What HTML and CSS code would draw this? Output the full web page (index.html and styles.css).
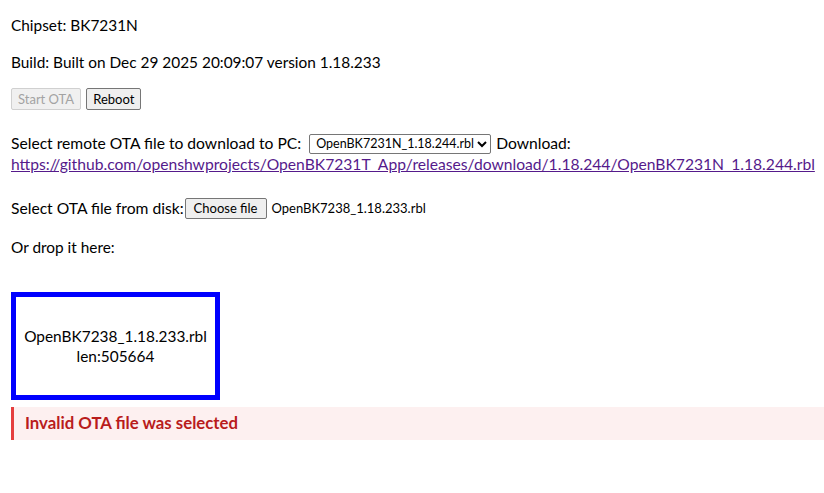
FILE: index.html
```html
<!DOCTYPE html>
<html lang="en">
<head>
<meta charset="utf-8">
<title>OTA</title>
<link rel="stylesheet" href="styles.css">
</head>
<body>
<div class="page">
  <div class="line l-chip">Chipset: BK7231N</div>
  <div class="line l-build">Build: Built on Dec 29 2025 20:09:07 version 1.18.233</div>
  <div class="buttons">
    <button class="btn" disabled>Start OTA</button>
    <button class="btn">Reboot</button>
  </div>
  <div class="remote">
    <div class="line wide">Select remote OTA file to download to PC:
      <select class="sel"><option>OpenBK7231N_1.18.244.rbl</option></select>
      Download:</div>
    <div class="line wide"><a class="link" href="#">https://github.com/openshwprojects/OpenBK7231T_App/releases/download/1.18.244/OpenBK7231N_1.18.244.rbl</a></div>
  </div>
  <div class="line disk wide">Select OTA file from disk:<span class="btn file-btn">Choose file</span><span class="file-name">OpenBK7238_1.18.233.rbl</span></div>
  <div class="line drop-label">Or drop it here:</div>
  <div class="dropzone">
    <div>OpenBK7238_1.18.233.rbl</div>
    <div>len:505664</div>
  </div>
  <div class="error">Invalid OTA file was selected</div>
</div>
</body>
</html>
```

FILE: styles.css
```css
html, body {
  margin: 0;
  padding: 0;
  background: #fff;
}
.page {
  padding: 15px 11px 40px;
  font-family: "Lato", "Open Sans", sans-serif;
  font-size: 15.4px;
  line-height: 20px;
  color: #000;
}
.line {
  line-height: 20px;
  white-space: nowrap;
}
.wide { font-size: 15.65px; }
.l-chip { margin-bottom: 17px; }
.l-build { margin-bottom: 16px; }
.buttons {
  display: flex;
  gap: 5px;
  height: 22px;
  margin-bottom: 23px;
}
.btn {
  font-family: inherit;
  font-size: 13px;
  line-height: 16px;
  padding: 2px 6px;
  background: #efefef;
  border: 1px solid #767676;
  border-radius: 2px;
  color: #000;
  box-sizing: border-box;
  height: 22px;
}
.btn:disabled {
  color: #a3a3a3;
  border-color: #d0d0d0;
  background: #f0f0f0;
}
.remote { margin-bottom: 24px; }
.sel {
  font-family: inherit;
  font-size: 12.5px;
  height: 20px;
  border: 1px solid #767676;
  border-radius: 2px;
  background: #fff;
  color: #000;
  vertical-align: 1px;
  padding: 0 0 0 2px;
  margin: 0 1px 0 4px;
}
.link {
  color: #551a8b;
  text-decoration: underline;
}
.disk {
  display: flex;
  align-items: center;
  margin-bottom: 18px;
}
.file-btn {
  display: inline-flex;
  align-items: center;
  margin-left: 1px;
  height: 21px;
  padding: 0 8px;
}
.file-name {
  font-size: 13px;
  margin-left: 5px;
}
.drop-label { margin-bottom: 35px; }
.dropzone {
  width: 199px;
  height: 98px;
  border: 5px solid #0000ff;
  display: flex;
  flex-direction: column;
  align-items: center;
  justify-content: center;
  text-align: center;
  margin-bottom: 7px;
}
.error {
  width: 100%;
  height: 33px;
  box-sizing: content-box;
  background: #fdf0f0;
  border-left: 3px solid #e53e3e;
  padding: 0 0 0 11px;
  color: #b91c1c;
  font-weight: bold;
  font-size: 16.8px;
  display: flex;
  align-items: center;
}
```
